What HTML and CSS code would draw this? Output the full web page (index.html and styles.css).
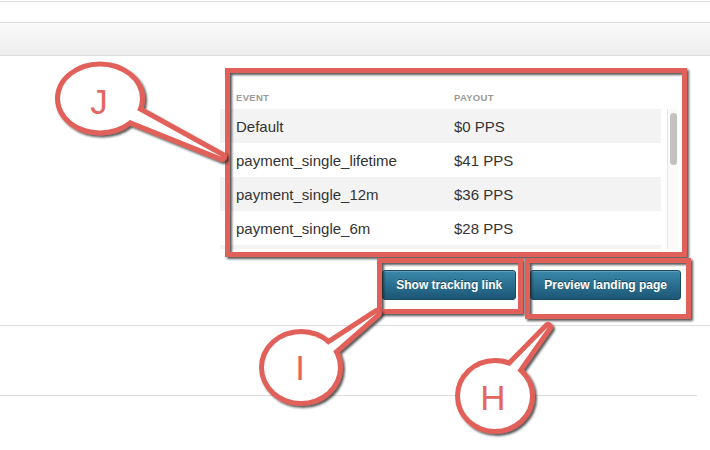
FILE: index.html
```html
<!DOCTYPE html>
<html>
<head>
<meta charset="utf-8">
<link rel="stylesheet" href="styles.css">
</head>
<body>
<div class="page">
  <div class="topline"></div>
  <div class="toolbar"></div>
  <main class="content">
    <section class="events">
      <div class="events-head">
        <span class="col-event">Event</span>
        <span class="col-payout">Payout</span>
      </div>
      <div class="events-body">
        <div class="rows">
          <div class="row alt"><span class="col-event">Default</span><span class="col-payout">$0 PPS</span></div>
          <div class="row"><span class="col-event">payment_single_lifetime</span><span class="col-payout">$41 PPS</span></div>
          <div class="row alt"><span class="col-event">payment_single_12m</span><span class="col-payout">$36 PPS</span></div>
          <div class="row"><span class="col-event">payment_single_6m</span><span class="col-payout">$28 PPS</span></div>
          <div class="row alt"></div>
        </div>
        <div class="scrolltrack"><div class="thumb"></div></div>
      </div>
    </section>
    <div class="actions">
      <button class="btn">Show tracking link</button>
      <button class="btn">Preview landing page</button>
    </div>
  </main>
  <div class="divider"></div>
  <div class="divider short"></div>
</div>

<svg class="annotations" width="710" height="450" viewBox="0 0 710 450">
  <defs>
    <filter id="shadow" x="-20%" y="-20%" width="140%" height="140%">
      <feDropShadow dx="2" dy="2" stdDeviation="1" flood-color="#222" flood-opacity="0.75"/>
    </filter>
  </defs>

  <g class="boxes" filter="url(#shadow)">
    <rect x="227.5" y="70.5" width="457" height="184"/>
    <rect x="379.5" y="260.5" width="141" height="51"/>
    <rect x="527.5" y="260.5" width="161" height="56"/>
  </g>

  <!-- J callout -->
  <g filter="url(#shadow)">
    <g class="bubble-stroke">
      <ellipse cx="100" cy="98.5" rx="40" ry="32"/>
      <polygon points="126,104 120,116 222,157"/>
    </g>
  </g>
  <g class="bubble-fill">
    <ellipse cx="100" cy="98.5" rx="40" ry="32"/>
    <polygon points="126,104 120,116 222,157"/>
  </g>
  <text class="letter" x="99" y="114">J</text>

  <!-- I callout -->
  <g filter="url(#shadow)">
    <g class="bubble-stroke">
      <ellipse cx="301" cy="367.5" rx="37" ry="33.5"/>
      <polygon points="314,354 321,362 377,313"/>
    </g>
  </g>
  <g class="bubble-fill">
    <ellipse cx="301" cy="367.5" rx="37" ry="33.5"/>
    <polygon points="314,354 321,362 377,313"/>
  </g>
  <text class="letter" x="300" y="380">I</text>

  <!-- H callout -->
  <g filter="url(#shadow)">
    <g class="bubble-stroke">
      <ellipse cx="495" cy="396" rx="35" ry="33"/>
      <polygon points="499,377 508,384 548,327"/>
    </g>
  </g>
  <g class="bubble-fill">
    <ellipse cx="495" cy="396" rx="35" ry="33"/>
    <polygon points="499,377 508,384 548,327"/>
  </g>
  <text class="letter" x="493" y="410">H</text>
</svg>
</body>
</html>
```

FILE: styles.css
```css
html, body {
  margin: 0;
  padding: 0;
  background: #ffffff;
}

body {
  font-family: "Liberation Sans", Arial, sans-serif;
  color: #333333;
  width: 710px;
  height: 450px;
  overflow: hidden;
  position: relative;
}

.page {
  display: flex;
  flex-direction: column;
}

.topline {
  margin-top: 1px;
  height: 1px;
  background: #dedede;
}

.toolbar {
  margin-top: 20px;
  height: 32px;
  border-top: 1px solid #dcdcdc;
  border-bottom: 1px solid #dcdcdc;
  background: linear-gradient(#fafafa, #eeeeee);
}

.content {
  display: flex;
  flex-direction: column;
  padding-top: 29px;
}

.events {
  width: 458px;
  margin-left: auto;
  margin-right: 32px;
}

.events-head {
  display: flex;
  align-items: center;
  height: 24px;
  padding-left: 16px;
  font-size: 9.5px;
  font-weight: bold;
  text-transform: uppercase;
  color: #9a9a9a;
  letter-spacing: 0.3px;
}

.col-event {
  width: 218px;
  flex: none;
}

.events-body {
  display: flex;
  gap: 6px;
  height: 140px;
  overflow: hidden;
}

.rows {
  width: 441px;
  flex: none;
  display: flex;
  flex-direction: column;
}

.row {
  display: flex;
  align-items: center;
  height: 34px;
  flex: none;
  padding-left: 16px;
  font-size: 15px;
  color: #333333;
}

.row.alt {
  background: #f3f3f3;
}

.scrolltrack {
  width: 11px;
  flex: none;
  background: #fafafa;
  border-left: 1px solid #e6e6e6;
  box-sizing: border-box;
  padding: 4px 1px 0 2px;
}

.thumb {
  height: 52px;
  border-radius: 4px;
  background: #c2c2c2;
}

.actions {
  display: flex;
  justify-content: flex-end;
  gap: 14px;
  margin-top: 21px;
  margin-right: 29px;
}

.btn {
  height: 30px;
  padding: 0 13px;
  border: 1px solid #1a4a63;
  border-radius: 3px;
  background: linear-gradient(#3a88aa, #1c5676);
  color: #ffffff;
  font-family: "Liberation Sans", Arial, sans-serif;
  font-size: 12px;
  font-weight: bold;
  line-height: 28px;
  text-shadow: 0 -1px 0 rgba(0, 0, 0, 0.45);
  box-shadow: inset 0 1px 0 rgba(255, 255, 255, 0.2);
}

.divider {
  height: 1px;
  background: #dcdcdc;
  margin-top: 25px;
}

.divider.short {
  margin-top: 69px;
  margin-right: 13px;
}

.annotations {
  position: absolute;
  left: 0;
  top: 0;
  pointer-events: none;
}

.boxes rect {
  fill: none;
  stroke: #e1605a;
  stroke-width: 5;
}

.bubble-stroke ellipse,
.bubble-stroke polygon {
  fill: #e1605a;
  stroke: #e1605a;
  stroke-width: 10;
  stroke-linejoin: round;
}

.bubble-fill ellipse,
.bubble-fill polygon {
  fill: #ffffff;
  stroke: none;
}

.letter {
  font-family: "Liberation Sans", Arial, sans-serif;
  font-size: 35px;
  fill: #e4665e;
  text-anchor: middle;
}
```
